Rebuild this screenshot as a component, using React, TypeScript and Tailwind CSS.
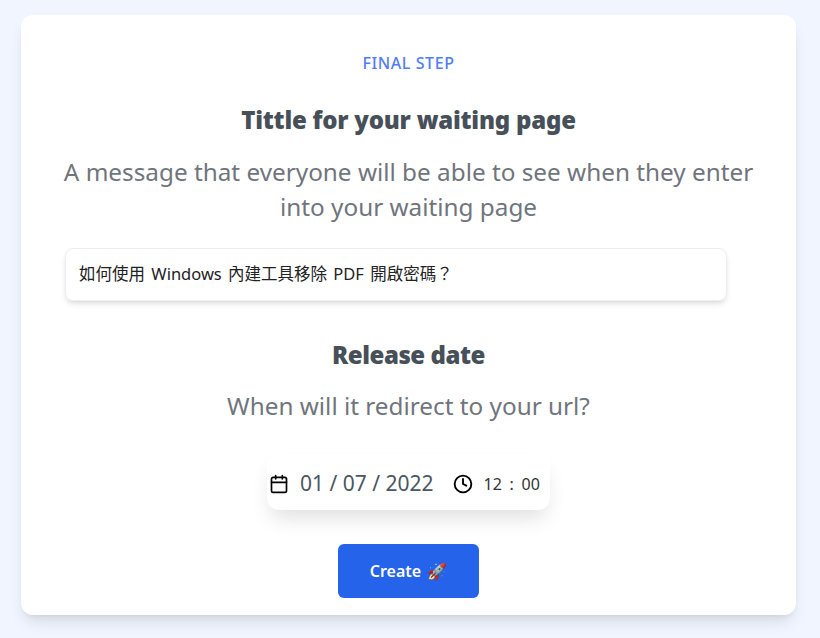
import React from "react";
import { Calendar, Clock } from "lucide-react";

export default function App() {
  return (
    <div className="h-[638px] overflow-hidden bg-[#f0f5ff] pt-[15px] pl-[21px] font-['Noto_Sans',sans-serif]">
      <div className="w-[775px] h-[600px] bg-white rounded-xl shadow-lg flex flex-col items-center pt-[37px]">
        <div className="text-base font-medium leading-[22px] tracking-[0.6px] text-[#4f7df3]">FINAL STEP</div>
        <h1 className="mt-[30px] text-2xl leading-[32px] font-black text-[#475059] tracking-[-0.23px]">Tittle for your waiting page</h1>
        <p className="mt-[18px] w-[710px] text-center text-[24.3px] leading-[35px] text-[#70757d]">A message that everyone will be able to see when they enter into your waiting page</p>
        <div className="self-start ml-[44px] mt-[24px] w-[662px] h-[53px] flex items-center px-[13px] rounded-lg border border-[#eeeeee] shadow-md text-[16.5px] text-[#222222] [word-spacing:2px] font-['Noto_Sans','Noto_Sans_CJK_TC',sans-serif]">如何使用 Windows 內建工具移除 PDF 開啟密碼？</div>
        <h2 className="mt-[38px] text-2xl leading-[32px] font-black text-[#475059] tracking-[-0.45px]">Release date</h2>
        <p className="mt-[17px] text-[24.3px] leading-[35px] text-[#70757d]">When will it redirect to your url?</p>
        <div className="mt-[31px] w-[283px] h-[56px] rounded-xl shadow-[0_12px_20px_-4px_rgba(0,0,0,0.12)] flex items-center pl-[2px] pt-[4px] text-[#4b5563]">
          <Calendar className="w-5 h-5 text-black" strokeWidth={2} />
          <span className="ml-[11px] text-[21px]">01 / 07 / 2022</span>
          <Clock className="w-5 h-5 text-black ml-[19px]" strokeWidth={2.25} />
          <span className="ml-[11px] text-base [word-spacing:3.5px] text-[#333333]">12 : 00</span>
        </div>
        <button className="mt-[34px] w-[141px] h-[54px] rounded-md bg-[#2563eb] text-white text-base font-semibold flex items-center justify-center gap-[6px]">Create <span className="text-base">🚀</span></button>
      </div>
    </div>
  );
}
